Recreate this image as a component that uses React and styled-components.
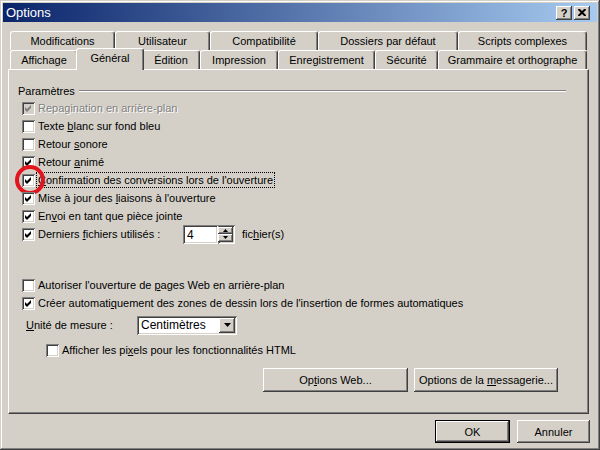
import React from "react";
import styled, { createGlobalStyle, css } from "styled-components";

const GlobalStyle = createGlobalStyle`
  html, body {
    margin: 0;
    padding: 0;
    background: #d4d0c8;
  }
  body {
    font-family: "Liberation Sans", Arial, sans-serif;
    font-size: 11px;
    color: #000;
  }
`;

const raised = css`
  background: #d4d0c8;
  box-shadow: inset -1px -1px #404040, inset 1px 1px #fff, inset -2px -2px #808080, inset 2px 2px #d4d0c8;
`;

const sunken = css`
  background: #fff;
  box-shadow: inset 1px 1px #808080, inset -1px -1px #fff, inset 2px 2px #404040, inset -2px -2px #d4d0c8;
`;

const Window = styled.div`
  width: 600px;
  height: 450px;
  box-sizing: border-box;
  padding: 3px;
  background: #d4d0c8;
  box-shadow: inset -1px -1px #404040, inset 1px 1px #d4d0c8, inset -2px -2px #808080, inset 2px 2px #fff;
  display: flex;
  flex-direction: column;
`;

const TitleBar = styled.div`
  height: 19px;
  display: flex;
  align-items: center;
  padding: 0 7px 0 3px;
  background: linear-gradient(to right, #0a246a, #a6caf0);
`;

const Title = styled.div`
  flex: 1;
  color: #fff;
  font-size: 13px;
  line-height: 19px;
`;

const CaptionButton = styled.div`
  ${raised};
  width: 16px;
  height: 14px;
  margin-left: ${(p) => p.$gap || 0}px;
  display: flex;
  align-items: center;
  justify-content: center;
  font-weight: bold;
  font-size: 11px;
  line-height: 14px;
`;

const Body = styled.div`
  flex: 1;
  padding: 9px 8px 0 5px;
  display: flex;
  flex-direction: column;
`;

const TabRow = styled.div`
  display: flex;
  height: 19px;
  margin-left: 2px;
`;

const Tab = styled.div`
  box-sizing: border-box;
  width: ${(p) => p.$w}px;
  height: 19px;
  display: flex;
  align-items: center;
  justify-content: center;
  white-space: nowrap;
  background: #d4d0c8;
  border-top: 1px solid #fff;
  border-left: 1px solid #fff;
  border-right: 1px solid #404040;
  box-shadow: inset -1px 0 #808080;
  border-radius: 3px 3px 0 0;
  ${(p) =>
    p.$active &&
    css`
      position: relative;
      z-index: 1;
      width: ${p.$w + 4}px;
      height: 22px;
      margin: -2px -2px -1px;
      padding-bottom: 3px;
    `}
`;

const Panel = styled.div`
  box-sizing: border-box;
  height: 345px;
  padding: 14px 0 0 9px;
  border-top: 1px solid #fff;
  border-left: 1px solid #fff;
  border-right: 1px solid #404040;
  border-bottom: 1px solid #404040;
  box-shadow: inset -1px -1px #808080;
  display: flex;
  flex-direction: column;
`;

const Legend = styled.div`
  display: flex;
  align-items: center;
  height: 13px;
  margin-right: 22px;
  margin-bottom: 2px;
`;

const Rule = styled.div`
  flex: 1;
  height: 0;
  margin-left: 4px;
  border-top: 1px solid #808080;
  border-bottom: 1px solid #fff;
`;

const Row = styled.div`
  position: relative;
  display: flex;
  align-items: center;
  height: ${(p) => p.$h || 18}px;
  padding-left: ${(p) => p.$indent ?? 4}px;
  margin-top: ${(p) => p.$mt || 0}px;
  white-space: nowrap;
`;

const Box = styled.div`
  ${sunken};
  width: 13px;
  height: 13px;
  flex: none;
  margin-right: 3px;
  ${(p) => p.$disabled && css`background: #d4d0c8;`}
`;

const Label = styled.span`
  color: ${(p) => (p.$disabled ? "#808080" : "#000")};
  text-shadow: ${(p) => (p.$disabled ? "1px 1px #fff" : "none")};
  width: ${(p) => (p.$w ? `${p.$w}px` : "auto")};
  ${(p) =>
    p.$focus &&
    css`
      border: 1px dotted #000;
      padding: 1px 1px;
      margin-left: -2px;
    `}
`;

const U = styled.span`
  text-decoration: underline;
`;

const Mark = styled.div`
  position: absolute;
  left: -3px;
  top: -6px;
  width: 30px;
  height: 30px;
  box-sizing: border-box;
  border: 4px solid #e2141c;
  border-radius: 50%;
`;

const Spin = styled.div`
  display: flex;
  height: 19px;
  margin-right: 7px;
`;

const SpinInput = styled.div`
  ${sunken};
  width: 35px;
  box-sizing: border-box;
  padding: 3px 0 0 4px;
  font-size: 12px;
`;

const SpinButtons = styled.div`
  ${sunken};
  width: 17px;
  box-sizing: border-box;
  padding: 2px 2px 2px 0;
  display: flex;
  flex-direction: column;
`;

const SpinButton = styled.div`
  ${raised};
  flex: 1;
  display: flex;
  align-items: center;
  justify-content: center;
`;

const Select = styled.div`
  ${sunken};
  box-sizing: border-box;
  width: 100px;
  height: 19px;
  padding: 2px;
  display: flex;
  align-items: center;
`;

const SelectText = styled.span`
  flex: 1;
  padding-left: 2px;
  font-size: 12px;
`;

const DropButton = styled.div`
  ${raised};
  width: 16px;
  height: 15px;
  display: flex;
  align-items: center;
  justify-content: center;
`;

const ButtonRow = styled.div`
  display: flex;
  justify-content: flex-end;
  gap: ${(p) => p.$gap || 6}px;
  margin-top: ${(p) => p.$mt || 0}px;
  margin-right: ${(p) => p.$mr || 0}px;
`;

const Button = styled.div`
  ${raised};
  box-sizing: border-box;
  width: ${(p) => p.$w}px;
  height: ${(p) => p.$h || 24}px;
  display: flex;
  align-items: center;
  justify-content: center;
  white-space: pre;
  ${(p) =>
    p.$default &&
    css`
      box-shadow: inset 0 0 0 1px #000, inset -2px -2px #404040, inset 2px 2px #fff,
        inset -3px -3px #808080;
    `}
`;

const Check = ({ color = "#000" }) => (
  <svg width="13" height="13" viewBox="0 0 13 13">
    <polygon points="3,5 5,7 9,3 9,6 5,10 3,8" fill={color} />
  </svg>
);

const Arrow = ({ up, size = 3 }) => (
  <svg width={size * 2 + 1} height={size + 1} viewBox={`0 0 ${size * 2 + 1} ${size + 1}`}>
    <polygon
      points={up ? `0,${size + 1} ${size * 2 + 1},${size + 1} ${size + 0.5},0` : `0,0 ${size * 2 + 1},0 ${size + 0.5},${size + 1}`}
      fill="#000"
    />
  </svg>
);

const CheckBox = ({ checked, disabled }) => (
  <Box $disabled={disabled}>{checked && <Check color={disabled ? "#808080" : "#000"} />}</Box>
);

const topTabs = [
  ["Modifications", 105],
  ["Utilisateur", 95],
  ["Compatibilité", 108],
  ["Dossiers par défaut", 140],
  ["Scripts complexes", 129],
];

const bottomTabs = [
  ["Affichage", 68],
  ["Général", 64],
  ["Édition", 58],
  ["Impression", 78],
  ["Enregistrement", 97],
  ["Sécurité", 63],
  ["Grammaire et orthographe", 149],
];

export default function App() {
  return (
    <>
      <GlobalStyle />
      <Window>
        <TitleBar>
          <Title>Options</Title>
          <CaptionButton>?</CaptionButton>
          <CaptionButton $gap={2}>
            <svg width="8" height="7" viewBox="0 0 8 7">
              <path d="M0.5 0 L7.5 7 M7.5 0 L0.5 7" stroke="#000" strokeWidth="2" />
            </svg>
          </CaptionButton>
        </TitleBar>
        <Body>
          <TabRow>
            {topTabs.map(([t, w]) => (
              <Tab key={t} $w={w}>{t}</Tab>
            ))}
          </TabRow>
          <TabRow>
            {bottomTabs.map(([t, w]) => (
              <Tab key={t} $w={w} $active={t === "Général"}>{t}</Tab>
            ))}
          </TabRow>
          <Panel>
            <Legend>
              Paramètres
              <Rule />
            </Legend>
            <Row>
              <CheckBox checked disabled />
              <Label $disabled>Repagination en arrière-plan</Label>
            </Row>
            <Row>
              <CheckBox />
              <Label>Texte <U>b</U>lanc sur fond bleu</Label>
            </Row>
            <Row>
              <CheckBox />
              <Label>Retour <U>s</U>onore</Label>
            </Row>
            <Row>
              <CheckBox checked />
              <Label>Retour <U>a</U>nimé</Label>
            </Row>
            <Row>
              <CheckBox checked />
              <Label $focus><U>C</U>onfirmation des conversions lors de l'ouverture</Label>
              <Mark />
            </Row>
            <Row>
              <CheckBox checked />
              <Label>Mise à jour des <U>l</U>iaisons à l'ouverture</Label>
            </Row>
            <Row>
              <CheckBox checked />
              <Label>En<U>v</U>oi en tant que pièce jointe</Label>
            </Row>
            <Row>
              <CheckBox checked />
              <Label $w={145}>Derniers <U>f</U>ichiers utilisés :</Label>
              <Spin>
                <SpinInput>4</SpinInput>
                <SpinButtons>
                  <SpinButton><Arrow up size={2} /></SpinButton>
                  <SpinButton><Arrow size={2} /></SpinButton>
                </SpinButtons>
              </Spin>
              <Label>fic<U>h</U>ier(s)</Label>
            </Row>
            <Row $mt={33}>
              <CheckBox />
              <Label>Autoriser l'ouverture de <U>p</U>ages Web en arrière-plan</Label>
            </Row>
            <Row>
              <CheckBox checked />
              <Label>
                Créer automati<U>q</U>uement des zones de dessin lors de l'insertion de formes automatiques
              </Label>
            </Row>
            <Row $h={22} $indent={8} $mt={2}>
              <Label $w={111}><U>U</U>nité de mesure :</Label>
              <Select>
                <SelectText>Centimètres</SelectText>
                <DropButton><Arrow /></DropButton>
              </Select>
            </Row>
            <Row $indent={28} $mt={5}>
              <CheckBox />
              <Label>Afficher les pi<U>x</U>els pour les fonctionnalités HTML</Label>
            </Row>
            <ButtonRow $mt={9} $mr={30}>
              <Button $w={145}><span>Op<U>t</U>ions Web...</span></Button>
              <Button $w={144}><span>Options de la <U>m</U>essagerie...</span></Button>
            </ButtonRow>
          </Panel>
          <ButtonRow $mt={6} $gap={7} $mr={-1}>
            <Button $w={75} $h={23} $default><span>OK</span></Button>
            <Button $w={73} $h={23}><span>Annuler</span></Button>
          </ButtonRow>
        </Body>
      </Window>
    </>
  );
}
